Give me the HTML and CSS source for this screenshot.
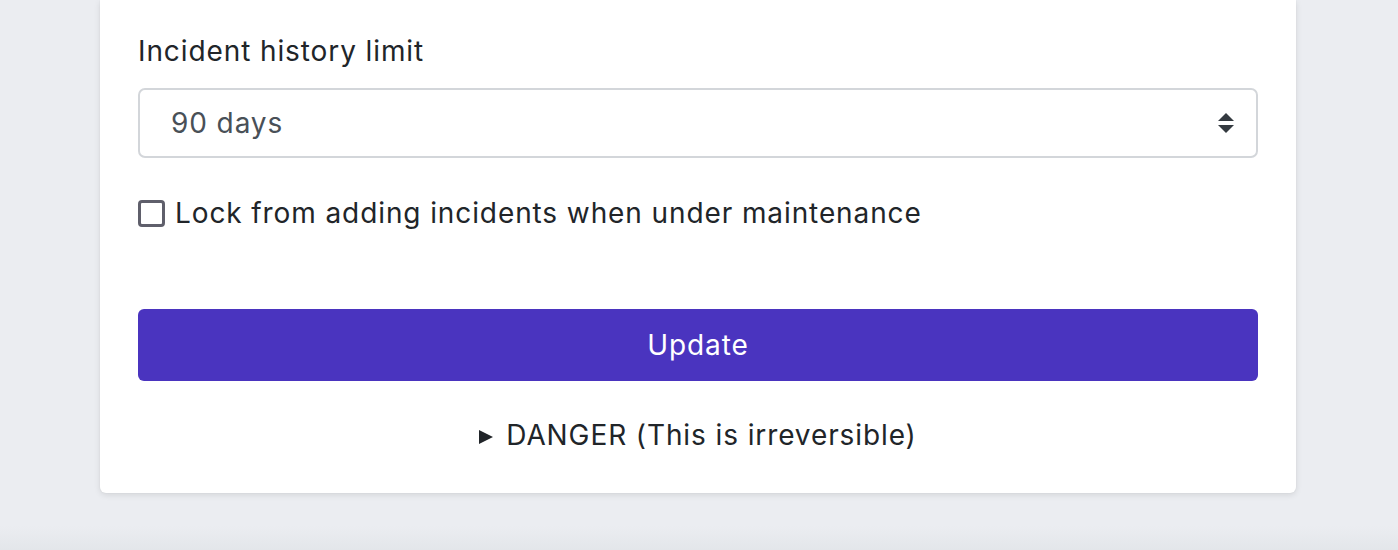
FILE: index.html
```html
<!DOCTYPE html>
<html lang="en">
<head>
<meta charset="utf-8">
<title>Settings</title>
<link rel="stylesheet" href="styles.css">
</head>
<body>
<main class="page">
  <section class="card">
    <form class="form">
      <label class="label" for="limit">Incident history limit</label>
      <div class="select-wrap">
        <select id="limit" class="select">
          <option>90 days</option>
        </select>
        <svg class="select-arrows" width="16" height="21" viewBox="0 0 16 21" aria-hidden="true">
          <path d="M8 0 L16 8 L0 8 Z" fill="#343a40"/>
          <path d="M0 12 L16 12 L8 20 Z" fill="#343a40"/>
        </svg>
      </div>
      <label class="check">
        <input type="checkbox" class="check-box">
        <span>Lock from adding incidents when under maintenance</span>
      </label>
      <button type="button" class="btn">Update</button>
      <details class="danger">
        <summary><span class="marker" aria-hidden="true"></span>DANGER (This is irreversible)</summary>
      </details>
    </form>
  </section>
  <div class="footer-band"></div>
</main>
</body>
</html>
```

FILE: styles.css
```css
html, body {
  margin: 0;
  padding: 0;
}
body {
  background: #ebedf1;
  font-family: Inter, "Noto Sans", "Liberation Sans", sans-serif;
  color: #212529;
  letter-spacing: 0.9px;
  height: 550px;
  overflow: hidden;
}
.page {
  display: flex;
  flex-direction: column;
  height: 550px;
}
.card {
  margin: 0 102px 0 100px;
  background: #ffffff;
  border-radius: 0 0 6px 6px;
  box-shadow: 0 2px 6px rgba(0, 0, 0, 0.10), 0 0 2px rgba(0, 0, 0, 0.06);
  padding: 33px 38px 40px 38px;
}
.form {
  display: flex;
  flex-direction: column;
}
.label {
  font-size: 28px;
  line-height: 36px;
  margin-bottom: 19px;
  color: #212529;
}
.select-wrap {
  position: relative;
}
.select {
  appearance: none;
  -webkit-appearance: none;
  width: 100%;
  height: 70px;
  box-sizing: border-box;
  border: 2px solid #d3d6da;
  border-radius: 7px;
  background: #ffffff;
  padding: 0 31px;
  font-family: inherit;
  font-size: 28px;
  letter-spacing: 0.9px;
  color: #495057;
  outline: none;
}
.select-arrows {
  position: absolute;
  right: 24px;
  top: 25px;
}
.check {
  display: flex;
  align-items: center;
  gap: 10px;
  margin-top: 40px;
  font-size: 28px;
  line-height: 30px;
  color: #212529;
}
.check-box {
  appearance: none;
  -webkit-appearance: none;
  margin: 0;
  width: 27px;
  height: 27px;
  box-sizing: border-box;
  border: 3px solid #5f5f6b;
  border-radius: 4px;
  background: #fff;
}
.btn {
  margin-top: 81px;
  height: 72px;
  border: none;
  border-radius: 6px;
  background: #4a34bf;
  color: #ffffff;
  font-family: inherit;
  font-size: 28px;
  letter-spacing: 0.9px;
}
.danger {
  margin-top: 36px;
  text-align: center;
  font-size: 28px;
  line-height: 36px;
  color: #212529;
}
.danger summary {
  list-style: none;
  cursor: pointer;
}
.danger summary::-webkit-details-marker {
  display: none;
}
.marker {
  display: inline-block;
  width: 0;
  height: 0;
  border-top: 7px solid transparent;
  border-bottom: 7px solid transparent;
  border-left: 14px solid #212529;
  margin-right: 13px;
  vertical-align: 1px;
}
.footer-band {
  margin-top: auto;
  height: 24px;
  background: linear-gradient(#ebedf1, #e3e6ea);
}
```
